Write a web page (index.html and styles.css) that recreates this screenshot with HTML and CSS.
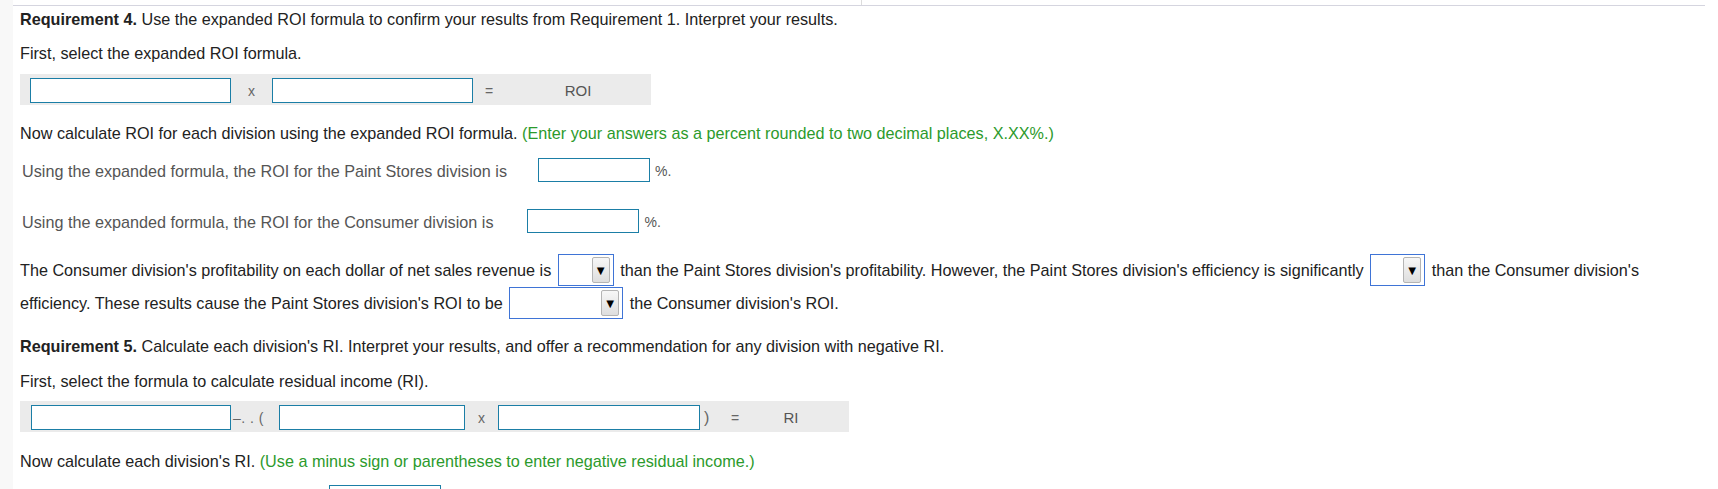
FILE: index.html
```html
<!DOCTYPE html>
<html>
<head>
<meta charset="utf-8">
<title>Requirements 4 and 5</title>
<link rel="stylesheet" href="styles.css">
</head>
<body>
<div class="page">
  <div class="gutter"></div>
  <div class="main">
    <div class="tabs"><div class="tabcell"></div></div>
    <div class="content">
      <p class="p req4"><b>Requirement 4.</b> Use the expanded ROI formula to confirm your results from Requirement 1. Interpret your results.</p>
      <p class="p first">First, select the expanded ROI formula.</p>
      <div class="bar bar-roi">
        <span class="inp w201"></span>
        <span class="op op-x1">x</span>
        <span class="inp w201"></span>
        <span class="op op-eq1">=</span>
        <span class="res res-roi">ROI</span>
      </div>
      <p class="p now">Now calculate ROI for each division using the expanded ROI formula. <span class="green">(Enter your answers as a percent rounded to two decimal places, X.XX%.)</span></p>
      <div class="row row-paint">
        <span class="lbl">Using the expanded formula, the ROI for the Paint Stores division is</span>
        <span class="inp w112 h24"></span>
        <span class="pct">%.</span>
      </div>
      <div class="row row-cons">
        <span class="lbl lbl-cons">Using the expanded formula, the ROI for the Consumer division is</span>
        <span class="inp w112 h24"></span>
        <span class="pct">%.</span>
      </div>
      <p class="p interp">The Consumer division's profitability on each dollar of net sales revenue is <span class="sel s56"><span class="btn">&#9660;</span></span> than the Paint Stores division's profitability. However, the Paint Stores division's efficiency is significantly <span class="sel s55"><span class="btn">&#9660;</span></span> than the Consumer division's efficiency. These results cause the Paint Stores division's ROI to be <span class="sel s114"><span class="btn">&#9660;</span></span> the Consumer division's ROI.</p>
      <p class="p req5"><b>Requirement 5.</b> Calculate each division's RI. Interpret your results, and offer a recommendation for any division with negative RI.</p>
      <p class="p first-ri">First, select the formula to calculate residual income (RI).</p>
      <div class="bar bar-ri">
        <span class="inp w200"></span>
        <span class="op op-minus">&ndash;. . (</span>
        <span class="inp w186"></span>
        <span class="op op-x2">x</span>
        <span class="inp w202"></span>
        <span class="op op-paren">)</span>
        <span class="op op-eq2">=</span>
        <span class="res res-ri">RI</span>
      </div>
      <p class="p now-ri">Now calculate each division's RI. <span class="green">(Use a minus sign or parentheses to enter negative residual income.)</span></p>
      <div class="row row-ri">
        <span class="inp w112 h24"></span>
      </div>
    </div>
  </div>
</div>
</body>
</html>
```

FILE: styles.css
```css
html, body {
  margin: 0;
  padding: 0;
  background: #ffffff;
}

body {
  font-family: "Liberation Sans", Arial, sans-serif;
  font-size: 16.2px;
  color: #222222;
}

.page {
  display: flex;
  min-height: 489px;
}

.gutter {
  width: 13px;
  flex: none;
  background: #f8f8f8;
}

.main {
  flex: 1;
  min-width: 0;
}

.tabs {
  height: 5px;
  display: flex;
}

.tabcell {
  width: 848px;
  border-right: 1px solid #dcdcdc;
}

.content {
  border-top: 1px solid #d5d5df;
  margin-right: 13px;
  padding-left: 7px;
  padding-right: 12px;
}

.p {
  margin: 0;
  line-height: 20px;
}

.req4 { margin-top: 3px; }
.first { margin-top: 14px; }
.now { margin-top: 18px; }
.req5 { margin-top: 16px; }
.first-ri { margin-top: 15px; }
.now-ri { margin-top: 19px; }

.green { color: #2c9a2c; }

/* formula bars */
.bar {
  display: flex;
  align-items: center;
  background: #ebebeb;
  padding: 4px 0 2px;
  box-sizing: border-box;
}

.bar-roi {
  width: 631px;
  margin-top: 11px;
  padding-left: 10px;
}

.bar-ri {
  width: 829px;
  margin-top: 10px;
  padding-left: 11px;
}

.inp {
  display: block;
  flex: none;
  height: 25px;
  box-sizing: border-box;
  border: 1px solid #1b7ea6;
  background: #ffffff;
}

.inp.h24 { height: 24px; }

.w201 { width: 201px; }
.w200 { width: 200px; }
.w186 { width: 186px; }
.w202 { width: 202px; }
.w112 { width: 112px; }

.op {
  flex: none;
  color: #666666;
  font-size: 14px;
  text-align: center;
}

.op-x1 { width: 41px; }
.op-eq1 { width: 32px; }
.op-minus { width: 48px; text-align: left; padding-left: 2px; box-sizing: border-box; letter-spacing: 0.5px; }
.op-x2 { width: 33px; }
.op-paren { width: 12px; text-align: left; padding-left: 4px; box-sizing: border-box; font-size: 16px; }
.op-eq2 { width: 46px; }

.res {
  flex: none;
  color: #555555;
  font-size: 15px;
  text-align: center;
}

.res-roi { width: 146px; }
.res-ri { width: 66px; }

/* answer rows */
.row {
  display: flex;
  align-items: center;
  padding-left: 2px;
  color: #555555;
}

.row-paint { margin-top: 15px; }
.row-cons { margin-top: 27px; }
.row-ri { margin-top: 14px; padding-left: 309px; }

.lbl {
  margin-right: 31px;
  padding-top: 2px;
}

.lbl-cons { margin-right: 34px; }

.pct {
  margin-left: 5px;
  font-size: 14px;
  padding-top: 2px;
}

/* inline dropdowns */
.interp {
  margin-top: 21px;
  line-height: 33px;
  padding-right: 20px;
}

.sel {
  display: inline-flex;
  justify-content: flex-end;
  align-items: center;
  height: 32px;
  box-sizing: border-box;
  border: 1px solid #3f74d6;
  background: #ffffff;
  vertical-align: top;
  margin: 0 2px;
  padding: 2px 3px 2px 2px;
  line-height: 1;
}

.s56 { width: 56px; }
.s55 { width: 55px; }
.s114 { width: 114px; }

.btn {
  display: flex;
  align-items: center;
  justify-content: center;
  width: 18px;
  height: 26px;
  box-sizing: border-box;
  border: 1px solid #b4b4b4;
  border-radius: 2px;
  background: linear-gradient(#f7f7f7, #dedede);
  color: #000000;
  font-size: 13px;
  line-height: 1;
}
```
